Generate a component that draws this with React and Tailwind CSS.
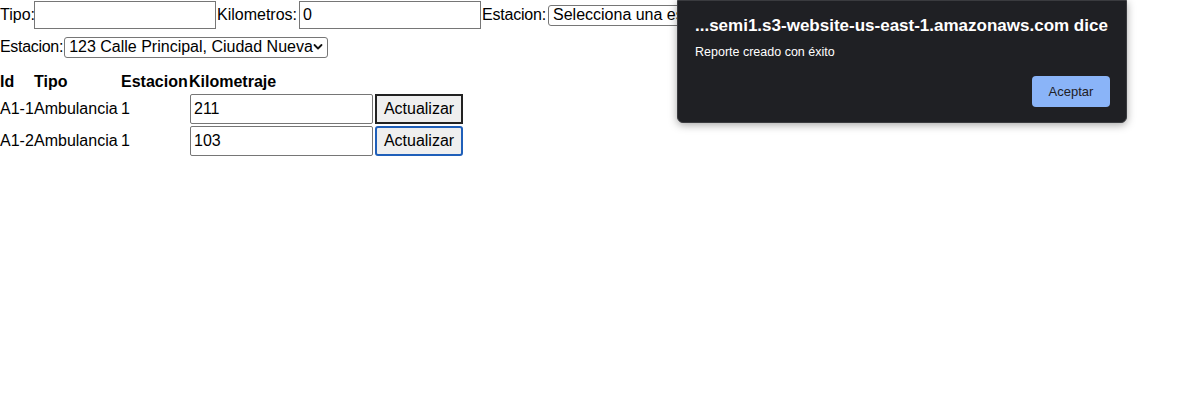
import React from 'react';

const Chevron = () => (
  <svg className="pointer-events-none absolute right-[4px] top-1/2 -translate-y-1/2" width="10" height="7" viewBox="0 0 10 7" fill="none">
    <path d="M1.5 1.5 L5 5 L8.5 1.5" stroke="#111" strokeWidth="1.8" strokeLinecap="round" strokeLinejoin="round" />
  </svg>
);

function Select({ value, width }) {
  return (
    <span className={`relative inline-flex h-[21px] ${width} items-center rounded-[3px] border border-[#767676] bg-white`}>
      <span className="whitespace-nowrap pl-[4px] leading-none">{value}</span>
      <Chevron />
    </span>
  );
}

const rows = [
  { id: 'A1-1', tipo: 'Ambulancia', estacion: '1', km: '211', focused: false },
  { id: 'A1-2', tipo: 'Ambulancia', estacion: '1', km: '103', focused: true },
];

function App() {
  return (
    <div className="relative h-[410px] w-[1201px] overflow-hidden bg-white text-[16px] text-black" style={{ fontFamily: '"Liberation Sans", Arial, sans-serif' }}>
      {/* Form */}
      <div className="flex h-[30px] items-center">
        <span className="w-[34px]">Tipo:</span>
        <input className="h-[28px] w-[182px] border border-[#767676] px-[3px] outline-none" defaultValue="" />
        <span className="ml-[1px] w-[82px]">Kilometros:</span>
        <input className="h-[28px] w-[182px] border border-[#767676] px-[3px] outline-none" defaultValue="0" />
        <span className="ml-[1px] w-[66px] whitespace-nowrap tracking-[-0.2px]">Estacion:</span>
        <span>
          <Select value="Selecciona una estación" width="w-[170px]" />
        </span>
      </div>
      <div className="mt-[6px] flex h-[22px] items-center">
        <span className="tracking-[-0.3px]">Estacion:</span>
        <span className="ml-[1px]">
          <Select value="123 Calle Principal, Ciudad Nueva" width="w-[264px]" />
        </span>
      </div>

      {/* Table */}
      <div className="mt-[14px]">
        <div className="flex h-[20px] items-center font-bold">
          <span className="w-[34px]">Id</span>
          <span className="w-[87px]">Tipo</span>
          <span className="w-[68px]">Estacion</span>
          <span>Kilometraje</span>
        </div>
        {rows.map((r) => (
          <div key={r.id} className="mt-[2px] flex h-[30px] items-center">
            <span className="w-[34px]">{r.id}</span>
            <span className="w-[87px]">{r.tipo}</span>
            <span className="w-[69px]">{r.estacion}</span>
            <input className="h-[30px] w-[183px] rounded-[2px] border border-[#767676] px-[3px] outline-none" defaultValue={r.km} />
            <button
              className={
                r.focused
                  ? 'ml-[2px] h-[30px] w-[88px] rounded-[3px] border-2 border-[#1f5fb9] bg-[#efefef] text-center'
                  : 'ml-[2px] h-[30px] w-[88px] border-2 border-[#222] bg-[#efefef] text-center'
              }
            >
              Actualizar
            </button>
          </div>
        ))}
      </div>

      {/* Alert dialog */}
      <div className="absolute left-[677px] top-0 h-[123px] w-[450px] rounded-b-[6px] border border-[#3a3b3f] bg-[#1f2024] shadow-[0_2px_8px_rgba(0,0,0,0.35)]">
        <div className="pl-[17px] pt-[15px] text-[17px] font-bold leading-[20px] text-white">
          ...semi1.s3-website-us-east-1.amazonaws.com dice
        </div>
        <div className="pl-[17px] pt-[9px] text-[12.5px] leading-[14px] text-white">Reporte creado con éxito</div>
        <div className="flex justify-end pr-[16px] pt-[17px]">
          <button className="h-[31px] w-[78px] rounded-[4px] bg-[#8ab4f8] text-[13px] text-[#1f2024]">Aceptar</button>
        </div>
      </div>
    </div>
  );
}

export default App;
